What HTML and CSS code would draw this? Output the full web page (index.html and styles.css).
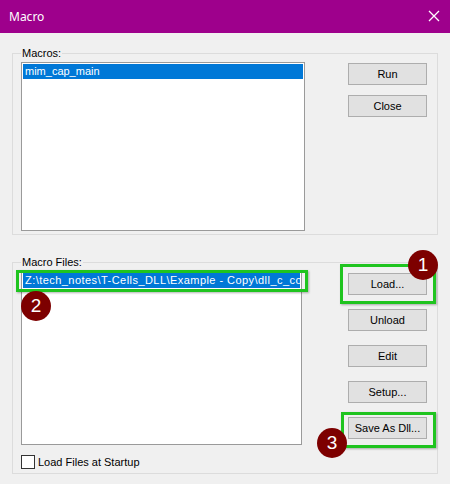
FILE: index.html
```html
<!DOCTYPE html>
<html>
<head>
<meta charset="utf-8">
<link rel="stylesheet" href="styles.css">
</head>
<body>
<div class="titlebar">
  <span class="title">Macro</span>
  <svg class="close-x" width="12" height="12" viewBox="0 0 12 12"><path d="M1 1 L11 11 M11 1 L1 11" stroke="#fff" stroke-width="1.3" fill="none"/></svg>
</div>
<div class="dialog">
  <fieldset class="group group-macros">
    <legend>Macros:</legend>
    <div class="row">
      <div class="listbox lb-macros">
        <div class="item selected">mim_cap_main</div>
      </div>
      <div class="buttons">
        <button class="btn">Run</button>
        <button class="btn">Close</button>
      </div>
    </div>
  </fieldset>
  <fieldset class="group group-files">
    <legend>Macro Files:</legend>
    <div class="row">
      <div class="leftcol">
        <div class="listbox lb-files">
          <div class="item selected path">Z:\tech_notes\T-Cells_DLL\Example - Copy\dll_c_code</div>
        </div>
        <label class="check"><span class="box"></span>Load Files at Startup</label>
      </div>
      <div class="buttons buttons-files">
        <button class="btn">Load...</button>
        <button class="btn">Unload</button>
        <button class="btn">Edit</button>
        <button class="btn">Setup...</button>
        <button class="btn">Save As Dll...</button>
      </div>
    </div>
  </fieldset>
</div>
<div class="hl hl-file"></div>
<div class="hl hl-load"></div>
<div class="hl hl-save"></div>
<div class="badge badge-1">1</div>
<div class="badge badge-2">2</div>
<div class="badge badge-3">3</div>
</body>
</html>
```
FILE: styles.css
```css
html, body {
  margin: 0;
  padding: 0;
}
body {
  width: 450px;
  height: 484px;
  background: #f0f0f0;
  font-family: "Liberation Sans", Arial, sans-serif;
  font-size: 11px;
  color: #000;
  position: relative;
  overflow: hidden;
}
.titlebar {
  height: 33px;
  background: #9e008c;
  display: flex;
  align-items: center;
  justify-content: space-between;
  padding: 0 10px 0 9px;
  box-sizing: border-box;
}
.title {
  color: #fff;
  font-family: "Noto Sans", "Open Sans", sans-serif;
  font-size: 12px;
  margin-top: -1px;
}
.close-x {
  display: block;
  margin-top: -1px;
}
.dialog {
  padding: 14px 12px 0 12px;
}
.group {
  margin: 0;
  border: 1px solid #dcdcdc;
  padding: 2px 10px 3px 8px;
  width: 426px;
  box-sizing: border-box;
  min-width: 0;
}
.group legend {
  padding: 0 1px;
  margin-left: 0;
  line-height: 13px;
  font-size: 11px;
  color: #000;
}
.group-files {
  margin-top: 21px;
  padding-bottom: 4px;
}
.row {
  display: flex;
  align-items: flex-start;
}
.listbox {
  background: #fff;
  border: 1px solid #9a9a9a;
  padding: 1px;
  box-sizing: border-box;
  overflow: hidden;
}
.lb-macros {
  width: 284px;
  height: 169px;
}
.lb-files {
  width: 281px;
  height: 174px;
}
.item {
  height: 15px;
  line-height: 15px;
  padding-left: 2px;
  white-space: nowrap;
  overflow: hidden;
}
.item.selected {
  background: #0078d7;
  color: #fff;
}
.item.path {
  letter-spacing: 0.45px;
}
.leftcol {
  display: flex;
  flex-direction: column;
}
.check {
  display: flex;
  align-items: center;
  margin-top: 10px;
  height: 14px;
}
.box {
  width: 12px;
  height: 12px;
  border: 1px solid #333;
  background: #fff;
  margin-right: 3px;
}
.buttons {
  display: flex;
  flex-direction: column;
  gap: 10px;
  margin-left: 43px;
  padding-top: 1px;
}
.buttons-files {
  margin-left: 46px;
  padding-top: 2px;
  gap: 14px;
}
.btn {
  width: 79px;
  height: 22px;
  background: #e1e1e1;
  border: 1px solid #adadad;
  font-family: "Liberation Sans", Arial, sans-serif;
  font-size: 11px;
  color: #000;
  padding: 0;
  margin: 0;
}
.hl {
  position: absolute;
  border: 3px solid #1fc41f;
  box-shadow: 1px 1px 2px rgba(0,0,0,0.3);
  box-sizing: border-box;
}
.hl-file {
  left: 16px;
  top: 270px;
  width: 292px;
  height: 22px;
}
.hl-load {
  left: 340px;
  top: 264px;
  width: 96px;
  height: 40px;
}
.hl-save {
  left: 341px;
  top: 412px;
  width: 95px;
  height: 36px;
}
.badge {
  position: absolute;
  width: 30px;
  height: 30px;
  border-radius: 50%;
  background: #7d0000;
  color: #fff;
  font-family: "Liberation Sans", Arial, sans-serif;
  font-size: 19px;
  line-height: 30px;
  text-align: center;
}
.badge-1 {
  left: 408px;
  top: 250px;
}
.badge-2 {
  left: 21px;
  top: 291px;
}
.badge-3 {
  left: 317px;
  top: 428px;
}
```
